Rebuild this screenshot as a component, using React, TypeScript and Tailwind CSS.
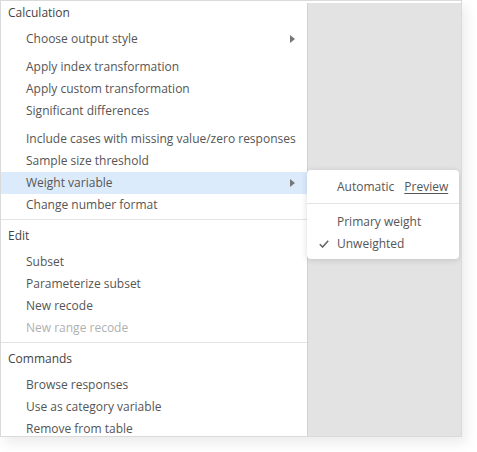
const Arrow = () => (
  <svg width="5" height="8" viewBox="0 0 5 8" className="fill-[#777]">
    <path d="M0 0 L5 4 L0 8 Z" />
  </svg>
);

type Item = { label: string; sub?: boolean; active?: boolean; disabled?: boolean };

const sections: { title: string; groups: Item[][] }[] = [
  {
    title: "Calculation",
    groups: [
      [{ label: "Choose output style", sub: true }],
      [
        { label: "Apply index transformation" },
        { label: "Apply custom transformation" },
        { label: "Significant differences" },
      ],
      [
        { label: "Include cases with missing value/zero responses" },
        { label: "Sample size threshold" },
        { label: "Weight variable", sub: true, active: true },
        { label: "Change number format" },
      ],
    ],
  },
  {
    title: "Edit",
    groups: [
      [
        { label: "Subset" },
        { label: "Parameterize subset" },
        { label: "New recode" },
        { label: "New range recode", disabled: true },
      ],
    ],
  },
  {
    title: "Commands",
    groups: [
      [
        { label: "Browse responses" },
        { label: "Use as category variable" },
        { label: "Remove from table" },
      ],
    ],
  },
];

const Row = ({ item }: { item: Item }) => (
  <div
    className={`flex h-[22px] items-center justify-between whitespace-nowrap pl-[25px] pr-[12px] ${
      item.active ? "bg-[#dcebfb]" : ""
    } ${item.disabled ? "text-[#b0b0b0]" : "text-[#555]"}`}
  >
    <span>{item.label}</span>
    {item.sub && <Arrow />}
  </div>
);

export default function App() {
  return (
    <div className="h-[452px] w-[477px] bg-white font-['Open_Sans',sans-serif] text-[12px]">
      <div className="relative flex h-[437px] w-[462px] overflow-hidden border border-[#dadada] shadow-[4px_6px_12px_rgba(0,0,0,0.08)]">
        <div className="w-[306px] shrink-0 bg-white">
          {sections.map((s, i) => (
            <div
              key={s.title}
              className={`${i > 0 ? "border-t border-[#e3e3e3] pt-[5px]" : "pt-[1px]"} pb-[3px]`}
            >
              <div className="flex h-[22px] items-center pl-[7px] text-[#444]">{s.title}</div>
              <div className="flex flex-col gap-[6px] pt-[4px]">
                {s.groups.map((g, j) => (
                  <div key={j}>
                    {g.map((it) => (
                      <Row key={it.label} item={it} />
                    ))}
                  </div>
                ))}
              </div>
            </div>
          ))}
        </div>
        <div className="mt-[2px] flex-1 border-l border-[#d2d2d2] bg-[#e3e3e3]" />

        <div className="absolute left-[306px] top-[169px] w-[152px] rounded-[4px] bg-white pb-[4px] pt-[4px] shadow-[0_1px_6px_rgba(0,0,0,0.15)]">
          <div className="flex h-[26px] items-center gap-[10px] whitespace-nowrap pl-[30px] text-[#555]">
            <span>Automatic</span>
            <span className="underline underline-offset-2">Preview</span>
          </div>
          <div className="mb-[7px] mt-[3px] border-t border-[#e3e3e3]" />
          <div className="flex h-[22px] items-center pl-[30px] text-[#555]">Primary weight</div>
          <div className="relative flex h-[22px] items-center pl-[30px] text-[#555]">
            <svg
              width="10"
              height="8"
              viewBox="0 0 10 8"
              className="absolute left-[12px] top-[7px] fill-none stroke-[#666]"
              strokeWidth="1.6"
            >
              <path d="M0.8 4.2 L3.6 7 L9.2 0.8" />
            </svg>
            Unweighted
          </div>
        </div>
      </div>
    </div>
  );
}
